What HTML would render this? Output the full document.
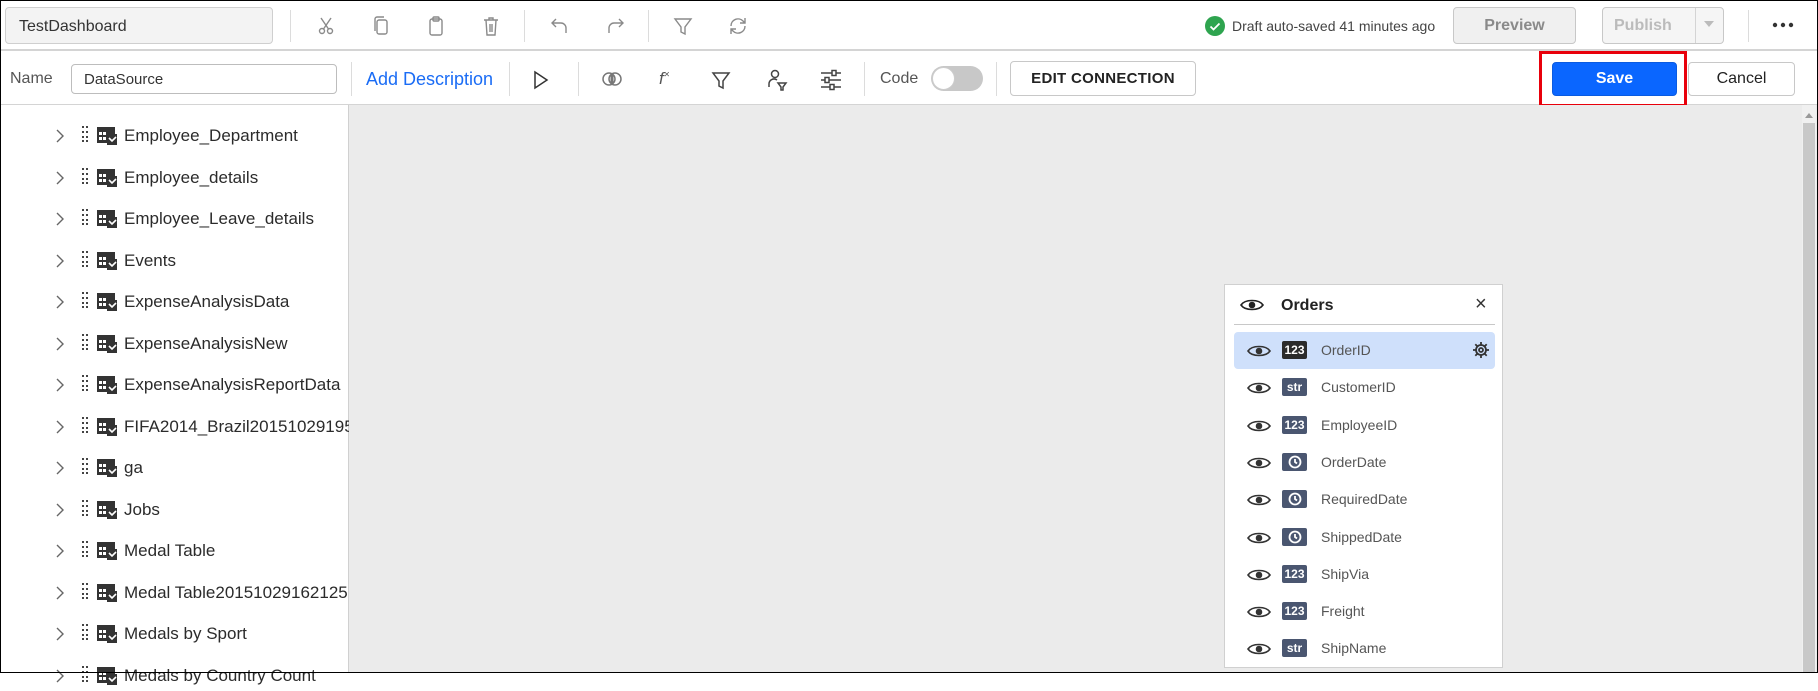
<!DOCTYPE html>
<html><head><meta charset="utf-8"><style>
*{box-sizing:border-box;margin:0;padding:0}
body{width:1818px;height:673px;overflow:hidden;font-family:"Liberation Sans",sans-serif;background:#fff;position:relative}
.a{position:absolute}
.frame{left:0;top:0;width:1818px;height:673px;border:1px solid #000;z-index:50;pointer-events:none}
.bar1{left:0;top:0;width:1818px;height:51px;background:#fff;border-bottom:2px solid #d4d4d4}
.bar2{left:0;top:51px;width:1818px;height:54px;background:#fff;border-bottom:1px solid #d4d4d4}
.sep{width:1px;background:#dcdcdc}
.btn{border:1px solid #c8c8c8;border-radius:4px;display:flex;align-items:center;justify-content:center;font-size:16px}
.tree{left:0;top:105px;width:349px;height:568px;background:#fff;border-right:1px solid #d0d0d0}
.row{position:absolute;left:0;height:30px;width:349px;font-size:17px;color:#2b2b2b;white-space:nowrap;overflow:hidden}
.panel{left:1224px;top:284px;width:279px;height:384px;background:#fff;border:1px solid #d0d0d0}
.f{position:absolute;left:9px;width:261px;height:37px;font-size:14px;color:#555}
.badge{position:absolute;left:48px;top:9px;width:25px;height:18px;background:#4a5670;border-radius:2px;color:#fff;font-size:12px;font-weight:bold;text-align:center;line-height:18px}
</style></head><body>
<div class="a frame"></div>
<div class="a bar1"></div>
<div class="a" style="left:5px;top:7px;width:268px;height:37px;background:#f3f3f3;border:1px solid #cfcfcf;border-radius:4px;font-size:16px;color:#333;padding:10px 0 0 13px">TestDashboard</div>
<div class="a sep" style="left:290px;top:10px;height:32px"></div>
<svg class="a" style="left:316px;top:16px" width="20" height="20" viewBox="0 0 20 20" fill="none" stroke="#8a8a8a" stroke-width="1.4"><circle cx="6" cy="15" r="2.5"/><circle cx="14" cy="15" r="2.5"/><path d="M7.5 13L15 2M12.5 13L5 2"/></svg>
<svg class="a" style="left:371px;top:15px" width="20" height="22" viewBox="0 0 20 22" fill="none" stroke="#8a8a8a" stroke-width="1.4"><rect x="6" y="5" width="10" height="14" rx="2"/><path d="M4 16V4a2 2 0 0 1 2-2h7"/></svg>
<svg class="a" style="left:426px;top:15px" width="20" height="22" viewBox="0 0 20 22" fill="none" stroke="#8a8a8a" stroke-width="1.4"><rect x="4" y="4" width="12" height="16" rx="2"/><rect x="7" y="2" width="6" height="4" rx="1"/></svg>
<svg class="a" style="left:481px;top:15px" width="20" height="22" viewBox="0 0 20 22" fill="none" stroke="#8a8a8a" stroke-width="1.4"><path d="M3 5h14M8 5V3h4v2M5 5l1 15h8l1-15M9 9v8M11 9v8"/></svg>
<div class="a sep" style="left:524px;top:10px;height:32px"></div>
<svg class="a" style="left:550px;top:16px" width="20" height="20" viewBox="0 0 20 20" fill="none" stroke="#8a8a8a" stroke-width="1.4"><path d="M6 3L2 7l4 4M2 7h9a5 5 0 0 1 5 5v5"/></svg>
<svg class="a" style="left:605px;top:16px" width="20" height="20" viewBox="0 0 20 20" fill="none" stroke="#8a8a8a" stroke-width="1.4"><path d="M14 3l4 4-4 4M18 7H9a5 5 0 0 0-5 5v5"/></svg>
<div class="a sep" style="left:648px;top:10px;height:32px"></div>
<svg class="a" style="left:673px;top:16px" width="20" height="20" viewBox="0 0 20 20" fill="none" stroke="#8a8a8a" stroke-width="1.4"><path d="M2 3h16l-6 8v7l-4-2v-5z"/></svg>
<svg class="a" style="left:727px;top:15px" width="22" height="22" viewBox="0 0 22 22" fill="none" stroke="#8a8a8a" stroke-width="1.4"><path d="M4 11a7 7 0 0 1 12-5l2 2M18 11a7 7 0 0 1-12 5l-2-2M18 3v5h-5M4 19v-5h5"/></svg>
<svg class="a" style="left:1205px;top:16px" width="20" height="20" viewBox="0 0 20 20"><circle cx="10" cy="10" r="10" fill="#2ea44f"/><path d="M5.5 10.5l3 3 6-6" stroke="#fff" stroke-width="1.8" fill="none"/></svg>
<div class="a" style="left:1232px;top:18px;font-size:14px;color:#444">Draft auto-saved 41 minutes ago</div>
<div class="a btn" style="left:1453px;top:7px;width:123px;height:37px;background:#f0f0f0;color:#8a8a8a;font-weight:bold">Preview</div>
<div class="a btn" style="left:1602px;top:7px;width:122px;height:37px;background:#f5f5f5;color:#bbb;font-weight:bold;justify-content:flex-start;padding-left:11px">Publish</div>
<div class="a" style="left:1695px;top:8px;width:1px;height:35px;background:#d4d4d4"></div>
<div class="a" style="left:1704px;top:21px;width:0;height:0;border-left:5px solid transparent;border-right:5px solid transparent;border-top:6px solid #bbb"></div>
<div class="a sep" style="left:1748px;top:10px;height:32px"></div>
<svg class="a" style="left:1772px;top:21px" width="22" height="8" viewBox="0 0 22 8" fill="#333"><circle cx="3" cy="4" r="2.2"/><circle cx="11" cy="4" r="2.2"/><circle cx="19" cy="4" r="2.2"/></svg>

<div class="a bar2"></div>
<div class="a" style="left:10px;top:70px;font-size:16px;color:#555">Name</div>
<div class="a" style="left:71px;top:64px;width:266px;height:30px;border:1px solid #bdbdbd;border-radius:4px;font-size:15px;color:#333;padding:6px 0 0 12px">DataSource</div>
<div class="a sep" style="left:351px;top:62px;height:34px"></div>
<div class="a" style="left:366px;top:69px;font-size:18px;color:#1a6cf5">Add Description</div>
<div class="a sep" style="left:509px;top:62px;height:34px"></div>
<svg class="a" style="left:532px;top:70px" width="18" height="20" viewBox="0 0 18 20" fill="none" stroke="#333" stroke-width="1.5"><path d="M3 2l12 8-12 8z"/></svg>
<div class="a sep" style="left:578px;top:62px;height:34px"></div>
<svg class="a" style="left:601px;top:71px" width="22" height="16" viewBox="0 0 22 16" fill="none" stroke="#777" stroke-width="1.5"><circle cx="8" cy="8" r="6"/><circle cx="14" cy="8" r="6"/><path d="M11 3v10" stroke-width="3"/></svg>
<div class="a" style="left:659px;top:69px;font-size:17px;color:#555;font-style:italic">f<sup style="font-size:10px">×</sup></div>
<svg class="a" style="left:711px;top:70px" width="20" height="20" viewBox="0 0 20 20" fill="none" stroke="#444" stroke-width="1.5"><path d="M2 3h16l-6 8v7l-4-2v-5z"/></svg>
<svg class="a" style="left:766px;top:68px" width="22" height="24" viewBox="0 0 22 24" fill="none" stroke="#444" stroke-width="1.5"><circle cx="9" cy="6" r="3.5"/><path d="M3 19v-3a5 5 0 0 1 8-4"/><path d="M12 15h8l-3 4v3h-2v-3z"/></svg>
<svg class="a" style="left:819px;top:68px" width="24" height="24" viewBox="0 0 24 24" fill="none" stroke="#444" stroke-width="1.5"><path d="M2 5h20M2 12h20M2 19h20"/><rect x="13" y="2.5" width="4" height="5" fill="#fff"/><rect x="6" y="9.5" width="4" height="5" fill="#fff"/><rect x="11" y="16.5" width="4" height="5" fill="#fff"/></svg>
<div class="a sep" style="left:864px;top:62px;height:34px"></div>
<div class="a" style="left:880px;top:70px;font-size:16px;color:#555">Code</div>
<div class="a" style="left:931px;top:66px;width:52px;height:25px;background:#c8c8c8;border-radius:13px"></div>
<div class="a" style="left:932px;top:67px;width:23px;height:23px;background:#fff;border-radius:50%;border:1px solid #ccc"></div>
<div class="a sep" style="left:996px;top:62px;height:34px"></div>
<div class="a btn" style="left:1010px;top:61px;width:186px;height:35px;color:#222;font-size:15px;letter-spacing:0.3px;font-weight:bold">EDIT CONNECTION</div>
<div class="a" style="left:1539px;top:51px;width:148px;height:56px;border:3px solid #e8000b"></div>
<div class="a btn" style="left:1552px;top:62px;width:125px;height:34px;background:#0a66ff;border-color:#0a5be0;color:#fff;font-weight:bold">Save</div>
<div class="a btn" style="left:1688px;top:62px;width:107px;height:34px;color:#222">Cancel</div>

<div class="a" style="left:0;top:105px;width:1818px;height:568px;background:#ebebeb"></div>
<div class="a" style="left:1802px;top:105px;width:14px;height:568px;background:#f0f0f0"></div>
<div class="a" style="left:1805px;top:113px;width:0;height:0;border-left:4px solid transparent;border-right:4px solid transparent;border-bottom:5px solid #999"></div>
<div class="a" style="left:1803px;top:123px;width:12px;height:550px;background:#c8c8c8"></div>

<div class="a tree">
<div id="rows"></div>
</div>
<script>
var names=["Employee_Department","Employee_details","Employee_Leave_details","Events","ExpenseAnalysisData","ExpenseAnalysisNew","ExpenseAnalysisReportData","FIFA2014_Brazil20151029195715","ga","Jobs","Medal Table","Medal Table20151029162125","Medals by Sport","Medals by Country Count"];
var h="";
names.forEach(function(n,i){var y=16+i*41.5;
h+='<div class="row" style="top:'+y+'px">'+
'<svg style="position:absolute;left:55px;top:7px" width="10" height="16" viewBox="0 0 10 16" fill="none" stroke="#666" stroke-width="1.4"><path d="M2 2l6 6-6 6"/></svg>'+
'<svg style="position:absolute;left:81px;top:4px" width="8" height="18" viewBox="0 0 8 18" fill="#444"><rect x="1" y="1" width="2" height="2"/><rect x="5" y="1" width="2" height="2"/><rect x="1" y="6" width="2" height="2"/><rect x="5" y="6" width="2" height="2"/><rect x="1" y="11" width="2" height="2"/><rect x="5" y="11" width="2" height="2"/><rect x="1" y="15" width="2" height="2"/><rect x="5" y="15" width="2" height="2"/></svg>'+
'<svg style="position:absolute;left:97px;top:6px" width="20" height="18" viewBox="0 0 20 18"><rect x="0" y="0" width="18" height="16" fill="#333"/><g fill="#fff"><rect x="2" y="5" width="3" height="3"/><rect x="6" y="5" width="3" height="3"/><rect x="2" y="10" width="3" height="3"/><rect x="6" y="10" width="3" height="3"/></g><rect x="10" y="7" width="10" height="11" fill="#333"/><path d="M12 11l3 3 4-4" stroke="#fff" stroke-width="1.6" fill="none"/></svg>'+
'<span style="position:absolute;left:124px;top:5px">'+n+'</span></div>';});
document.getElementById("rows").innerHTML=h;
</script>

<div class="a panel">
<svg style="position:absolute;left:15px;top:12px" width="24" height="16" viewBox="0 0 24 16" fill="none" stroke="#222" stroke-width="1.6"><path d="M1 8C5 2 19 2 23 8C19 14 5 14 1 8z"/><circle cx="12" cy="8" r="2.5" fill="#222"/></svg>
<div style="position:absolute;left:56px;top:12px;font-size:16px;font-weight:bold;color:#222">Orders</div>
<div style="position:absolute;left:250px;top:8px;font-size:20px;color:#333">×</div>
<div style="position:absolute;left:9px;top:39px;width:261px;height:1px;background:#c8c8c8"></div>
<div id="fields"></div>
</div>
<script>
var fs=[["OrderID","123"],["CustomerID","str"],["EmployeeID","123"],["OrderDate","clk"],["RequiredDate","clk"],["ShippedDate","clk"],["ShipVia","123"],["Freight","123"],["ShipName","str"]];
var g="";
fs.forEach(function(f,i){var y=47+i*37.3;
var bg=i==0?"background:#cfe0fb;border-radius:4px;":"";
var bc=i==0?"background:#2b2b2b;":"";
var inner=f[1]=="clk"?'<svg width="14" height="14" viewBox="0 0 14 14" style="margin-top:2px" fill="none" stroke="#fff" stroke-width="1.8"><circle cx="7" cy="7" r="5.5"/><path d="M7 4v3l2 1.5"/></svg>':f[1];
g+='<div class="f" style="top:'+y+'px;'+bg+'">'+
'<svg style="position:absolute;left:13px;top:11px" width="24" height="16" viewBox="0 0 24 16" fill="none" stroke="#333" stroke-width="1.6"><path d="M1 8C5 2 19 2 23 8C19 14 5 14 1 8z"/><circle cx="12" cy="8" r="2.5" fill="#333"/></svg>'+
'<div class="badge" style="'+bc+'">'+inner+'</div>'+
'<span style="position:absolute;left:87px;top:10px">'+f[0]+'</span>'+
(i==0?'<svg style="position:absolute;left:238px;top:9px" width="18" height="18" viewBox="0 0 18 18" fill="none" stroke="#333" stroke-width="1.8"><circle cx="9" cy="9" r="5"/><circle cx="9" cy="9" r="2"/><path d="M9 1v3M9 14v3M1 9h3M14 9h3M3.3 3.3l2 2M12.7 12.7l2 2M3.3 14.7l2-2M12.7 5.3l2-2"/></svg>':'')+
'</div>';});
document.getElementById("fields").innerHTML=g;
</script>
</body></html>
